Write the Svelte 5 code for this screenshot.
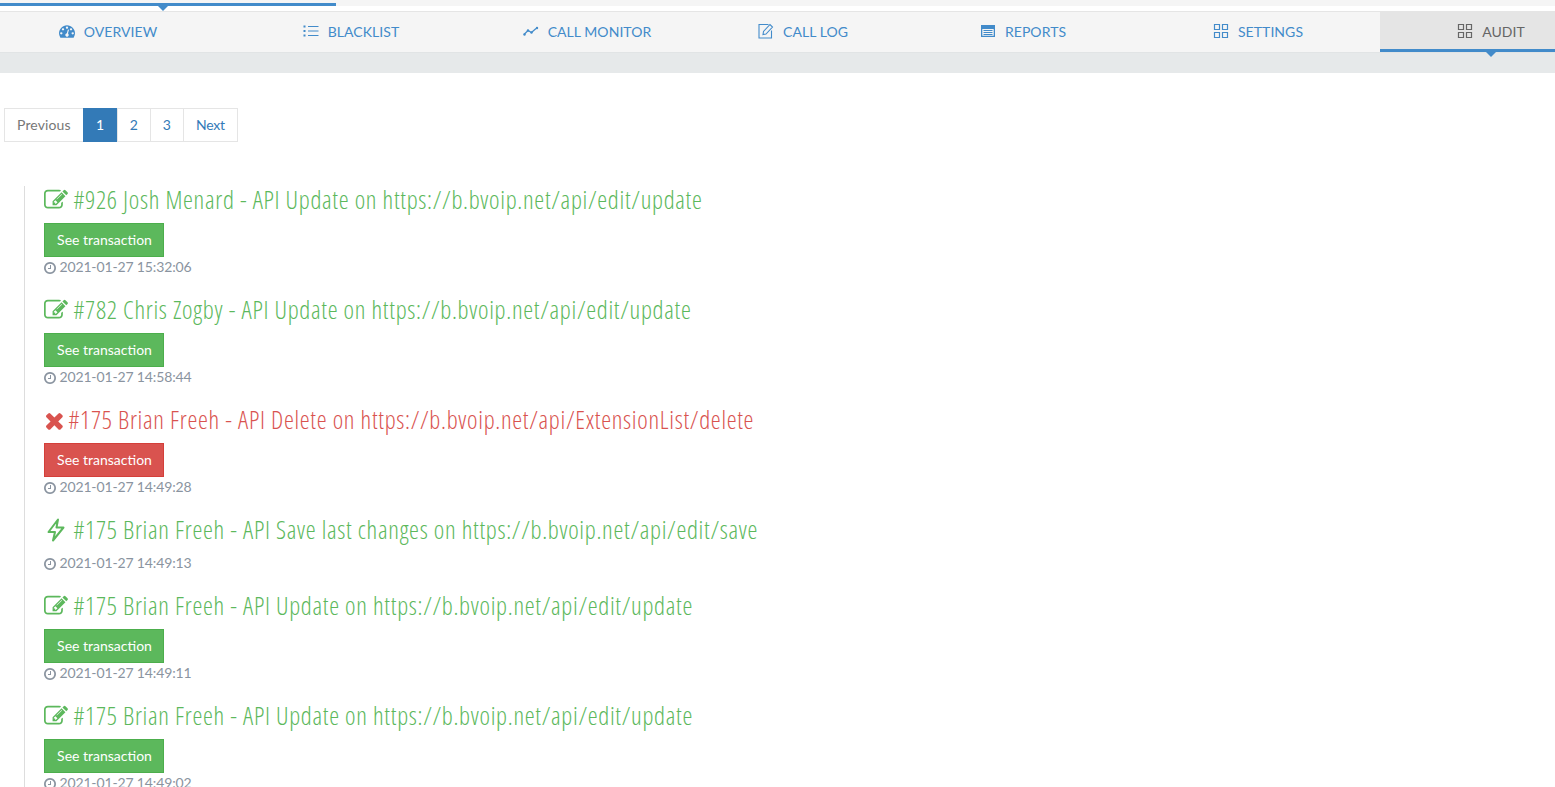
<script>
  const edit = "M888 1184l116-116-152-152-116 116v56h96v96h56zm440-720q-16-16-33 1l-350 350q-17 17-1 33t33-1l350-350q17-17 1-33zm80 594v190q0 119-84.5 203.5t-203.5 84.5h-832q-119 0-203.5-84.5t-84.5-203.5v-832q0-119 84.5-203.5t203.5-84.5h832q63 0 117 25 15 7 18 23 3 17-9 29l-49 49q-14 14-32 8-23-6-45-6h-832q-66 0-113 47t-47 113v832q0 66 47 113t113 47h832q66 0 113-47t47-113v-126q0-13 9-22l64-64q15-15 35-7t20 29zm-96-738l288 288-672 672h-288v-288zm444 132l-92 92-288-288 92-92q28-28 68-28t68 28l152 152q28 28 28 68t-28 68z";
  const times = "M1490 1322q0 40-28 68l-136 136q-28 28-68 28t-68-28l-294-294-294 294q-28 28-68 28t-68-28l-136-136q-28-28-28-68t28-68l294-294-294-294q-28-28-28-68t28-68l136-136q28-28 68-28t68 28l294 294 294-294q28-28 68-28t68 28l136 136q28 28 28 68t-28 68l-294 294 294 294q28 28 28 68z";
  const clock = "M1024 544v448q0 14-9 23t-23 9h-320q-14 0-23-9t-9-23v-64q0-14 9-23t23-9h224v-352q0-14 9-23t23-9h64q14 0 23 9t9 23zm416 352q0-148-73-273t-198-198-273-73-273 73-198 198-73 273 73 273 198 198 273 73 273-73 198-198 73-273zm224 0q0 209-103 385.5t-279.5 279.5-385.5 103-385.5-103-279.5-279.5-103-385.5 103-385.5 279.5-279.5 385.5-103 385.5 103 279.5 279.5 103 385.5z";
  const gauge = "M384 1152q0-53-37.5-90.5t-90.5-37.5-90.5 37.5-37.5 90.5 37.5 90.5 90.5 37.5 90.5-37.5 37.5-90.5zm192-448q0-53-37.5-90.5t-90.5-37.5-90.5 37.5-37.5 90.5 37.5 90.5 90.5 37.5 90.5-37.5 37.5-90.5zm428 481l101-382q6-26-7.5-48.5t-38.5-29.5-48 6.5-30 39.5l-101 382q-60 5-107 43.5t-63 98.5q-20 77 20 146t117 89 146-20 89-117q16-60-6-117t-72-91zm660-33q0-53-37.5-90.5t-90.5-37.5-90.5 37.5-37.5 90.5 37.5 90.5 90.5 37.5 90.5-37.5 37.5-90.5zm-640-640q0-53-37.5-90.5t-90.5-37.5-90.5 37.5-37.5 90.5 37.5 90.5 90.5 37.5 90.5-37.5 37.5-90.5zm448 192q0-53-37.5-90.5t-90.5-37.5-90.5 37.5-37.5 90.5 37.5 90.5 90.5 37.5 90.5-37.5 37.5-90.5zm320 448q0 261-141 483-19 29-54 29h-1402q-35 0-54-29-141-221-141-483 0-182 71-348t191-286 286-191 348-71 348 71 286 191 191 286 71 348z";

  const tabs = [
    { label: "OVERVIEW", icon: "gauge" },
    { label: "BLACKLIST", icon: "list" },
    { label: "CALL MONITOR", icon: "chart" },
    { label: "CALL LOG", icon: "log" },
    { label: "REPORTS", icon: "reports" },
    { label: "SETTINGS", icon: "grid" },
    { label: "AUDIT", icon: "grid", active: true },
  ];

  const entries = [
    { kind: "edit", text: "#926 Josh Menard - API Update on https://b.bvoip.net/api/edit/update", time: "2021-01-27 15:32:06" },
    { kind: "edit", text: "#782 Chris Zogby - API Update on https://b.bvoip.net/api/edit/update", time: "2021-01-27 14:58:44" },
    { kind: "del", text: "#175 Brian Freeh - API Delete on https://b.bvoip.net/api/ExtensionList/delete", time: "2021-01-27 14:49:28" },
    { kind: "save", text: "#175 Brian Freeh - API Save last changes on https://b.bvoip.net/api/edit/save", time: "2021-01-27 14:49:13" },
    { kind: "edit", text: "#175 Brian Freeh - API Update on https://b.bvoip.net/api/edit/update", time: "2021-01-27 14:49:11" },
    { kind: "edit", text: "#175 Brian Freeh - API Update on https://b.bvoip.net/api/edit/update", time: "2021-01-27 14:49:02" },
  ];
</script>

<div class="progress"><div class="bar"></div></div>

<nav>
  {#each tabs as tab}
    <div class="tab" class:active={tab.active}>
      {#if tab.icon === "gauge"}
        <svg class="ico" viewBox="0 0 1792 1792"><path fill="currentColor" d={gauge} /></svg>
      {:else if tab.icon === "list"}
        <svg class="ico" viewBox="0 0 16 16"><path fill="none" stroke="currentColor" d="M5 3.500h10.500M5 8h10.500M5 12.500h10.500" /><path fill="currentColor" d="M.5 2.500h2v2h-2zM.5 7h2v2h-2zM.5 11.500h2v2h-2z" /></svg>
      {:else if tab.icon === "chart"}
        <svg class="ico" viewBox="0 0 16 16"><path fill="none" stroke="currentColor" stroke-width="1.300" d="M1 11.500 5 7.500l3.500 2L13 5.500" /><circle cx="1.500" cy="11.500" r="1.200" fill="currentColor" /><circle cx="5" cy="7.500" r="1.200" fill="currentColor" /><circle cx="8.500" cy="9.500" r="1.200" fill="currentColor" /><circle cx="14" cy="5" r="1.200" fill="currentColor" /></svg>
      {:else if tab.icon === "log"}
        <svg class="ico" viewBox="0 0 16 16"><path fill="none" stroke="currentColor" stroke-width="1.100" d="M10.500 1.500H1v13.500h12.500V7.500M5.500 8.500 5 11.500l3-.5 6.500-7-2.500-2.500z" /></svg>
      {:else if tab.icon === "reports"}
        <svg class="ico" viewBox="0 0 16 16"><path fill="currentColor" d="M1 2h14v12H1zm1.300 4v6.700h11.400V6z" /><path fill="currentColor" d="M3.500 7h9v1h-9zM3.500 9h9v1h-9zM3.500 11h9v1h-9z" /></svg>
      {:else}
        <svg class="ico" viewBox="0 0 16 16"><path fill="none" stroke="currentColor" stroke-width="1.200" d="M1.500 1.500h5v5h-5zM9.500 1.500h5v5h-5zM1.500 9.500h5v5h-5zM9.500 9.500h5v5h-5z" /></svg>
      {/if}
      <span>{tab.label}</span>
    </div>
  {/each}
</nav>
<div class="subbar"></div>

<ul class="pagination">
  <li class="prev">Previous</li>
  <li class="current">1</li>
  <li>2</li>
  <li>3</li>
  <li class="next">Next</li>
</ul>

<div class="timeline">
  {#each entries as e}
    <div class="entry" class:danger={e.kind === "del"}>
      <h4>
        {#if e.kind === "edit"}
          <svg class="head-ico" viewBox="0 0 1792 1792"><path fill="currentColor" d={edit} /></svg>
        {:else if e.kind === "del"}
          <svg class="head-ico del" viewBox="160 222 1346 1346"><path fill="currentColor" d={times} /></svg>
        {:else}
          <svg class="head-ico bolt" viewBox="0 0 24 24"><path fill="none" stroke="currentColor" stroke-width="2" stroke-linejoin="round" d="M14 1.500 4.500 14h6.500L9 22.500 19.500 9.500h-7z" /></svg>
        {/if}
        {e.text}
      </h4>
      {#if e.kind !== "save"}
        <button>See transaction</button>
      {/if}
      <div class="time">
        <svg viewBox="128 128 1536 1536"><path fill="currentColor" d={clock} /></svg>
        {e.time}
      </div>
    </div>
  {/each}
</div>

<style>
  :global(body) {
    font-family: Lato, sans-serif;
    font-size: 14px;
    color: #333;
    background: #fff;
    overflow: hidden;
  }

  .progress {
    height: 6px;
    background: #f5f5f5;
    padding-top: 3px;
    box-sizing: border-box;
    position: relative;
  }

  .bar {
    width: 336px;
    height: 3px;
    background: #428bca;
    position: relative;
  }

  .bar::after {
    content: "";
    position: absolute;
    left: 158px;
    top: 3px;
    border: 5px solid transparent;
    border-top-color: #428bca;
    border-bottom: 0;
  }

  nav {
    margin-top: 5px;
    height: 41px;
    box-sizing: border-box;
    display: grid;
    grid-template-columns: 224px 254px 218px 214px 226px 244px 222px;
    background: #f5f5f5;
    border-top: 1px solid #e5e5e5;
    overflow: hidden;
    white-space: nowrap;
    letter-spacing: 0.06px;
  }

  .tab {
    display: flex;
    align-items: center;
    justify-content: center;
    gap: 9px;
    color: #428bca;
    padding-bottom: 2px;
  }

  .tab:first-child {
    padding-right: 8px;
  }

  .tab.active {
    background: #e5e5e5;
    color: #666;
    border-bottom: 3px solid #428bca;
    padding-top: 1px;
    padding-bottom: 0;
  }

  .ico {
    width: 16px;
    height: 16px;
    flex: none;
  }

  .subbar {
    height: 21px;
    background: #e6e9ea;
    border-top: 1px solid #e1e4e5;
    box-sizing: border-box;
    position: relative;
  }

  /* little pointer under the open tab */
  .subbar::after {
    content: "";
    position: absolute;
    left: 1486px;
    top: -1px;
    border: 5px solid transparent;
    border-top-color: #428bca;
    border-bottom: 0;
  }

  .pagination {
    list-style: none;
    display: flex;
    margin: 35px 0 0 4px;
    padding: 0;
    height: 34px;
  }

  .pagination li {
    padding: 6px 12px;
    line-height: 20px;
    border: 1px solid #e5e5e5;
    margin-left: -1px;
    color: #337ab7;
    background: #fff;
  }

  .pagination li.prev {
    color: #777;
    margin-left: 0;
    letter-spacing: 0.12px;
  }

  .pagination li.next {
    letter-spacing: -0.2px;
  }

  .pagination li.current {
    background: #337ab7;
    border-color: #337ab7;
    color: #fff;
    width: 9px;
    text-align: center;
  }

  .timeline {
    margin: 44px 0 0 24px;
    padding-left: 19px;
    border-left: 1px solid #ddd;
  }

  .entry {
    padding-bottom: 19px;
    color: #5cb85c;
  }

  .entry.danger {
    color: #d9534f;
  }

  h4 {
    margin: 0;
    height: 37px;
    font-family: "Open Sans", sans-serif;
    font-weight: 300;
    font-stretch: 75%;
    letter-spacing: 0.7px;
    font-size: 25px;
    line-height: 26px;
    white-space: nowrap;
  }

  .head-ico {
    width: 24px;
    height: 24px;
    vertical-align: -3px;
  }

  .head-ico.del {
    width: 19px;
    height: 19px;
    vertical-align: -1px;
  }

  button {
    display: block;
    width: 120px;
    height: 34px;
    padding: 0 0 0 1px;
    font: 14px/20px Lato, sans-serif;
    color: #fff;
    background: #5cb85c;
    border: 1px solid #4cae4c;
    cursor: pointer;
  }

  .danger button {
    background: #d9534f;
    border-color: #d43f3a;
  }

  .time {
    height: 20px;
    line-height: 20px;
    color: #8a94a0;
    letter-spacing: -0.14px;
    white-space: nowrap;
  }

  .time svg {
    width: 12px;
    height: 12px;
    vertical-align: -1.500px;
  }
</style>
